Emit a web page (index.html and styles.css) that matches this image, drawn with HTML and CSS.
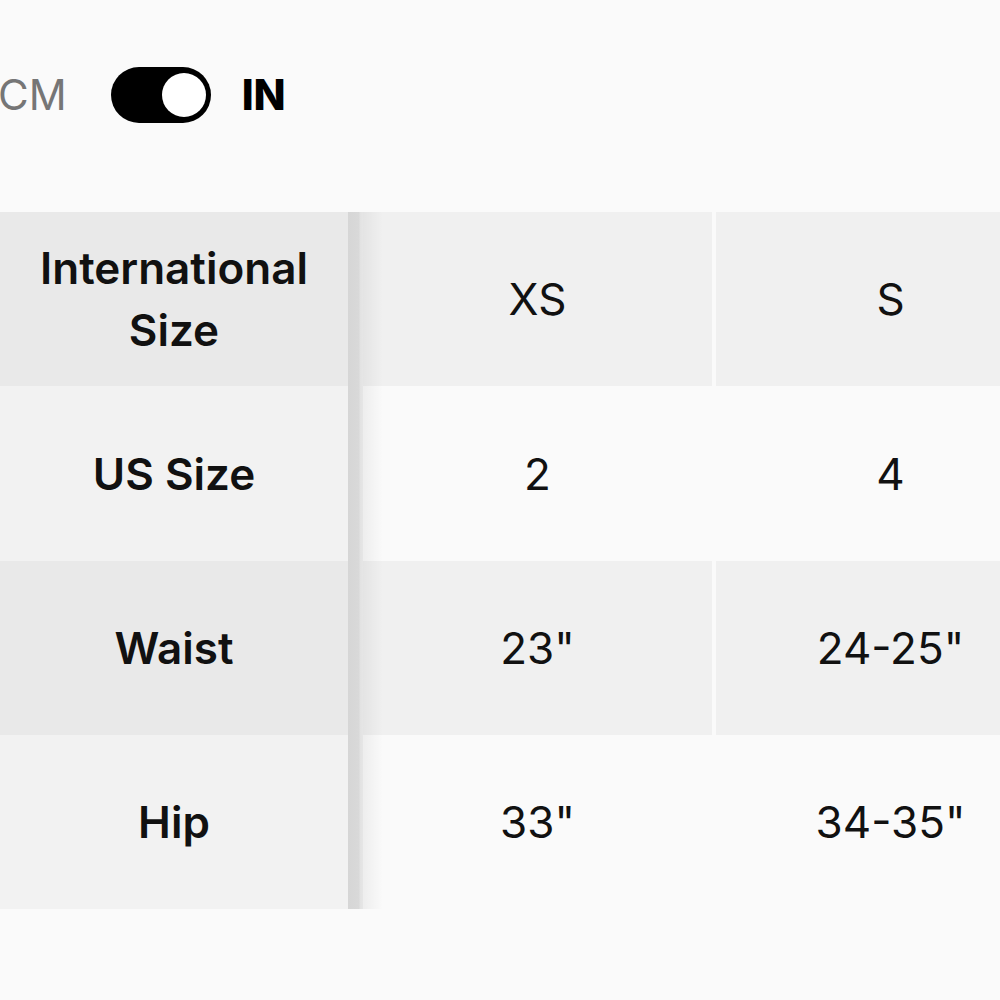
FILE: index.html
```html
<!DOCTYPE html>
<html>
<head>
<meta charset="utf-8">
<link rel="stylesheet" href="styles.css">
</head>
<body>
<div class="units">
  <span class="unit unit-off">CM</span>
  <span class="toggle"><span class="knob"></span></span>
  <span class="unit unit-on">IN</span>
</div>
<div class="table">
  <div class="row row-dark">
    <div class="cell label">International<br>Size</div>
    <div class="shade"></div>
    <div class="cell value first">XS</div>
    <div class="gap"></div>
    <div class="cell value">S</div>
  </div>
  <div class="row row-light">
    <div class="cell label">US Size</div>
    <div class="shade"></div>
    <div class="cell value first">2</div>
    <div class="gap"></div>
    <div class="cell value">4</div>
  </div>
  <div class="row row-dark">
    <div class="cell label">Waist</div>
    <div class="shade"></div>
    <div class="cell value first">23"</div>
    <div class="gap"></div>
    <div class="cell value">24-25"</div>
  </div>
  <div class="row row-light">
    <div class="cell label">Hip</div>
    <div class="shade"></div>
    <div class="cell value first">33"</div>
    <div class="gap"></div>
    <div class="cell value">34-35"</div>
  </div>
</div>
</body>
</html>
```
FILE: styles.css
```css
html, body {
  margin: 0;
  padding: 0;
  background: #fafafa;
  font-family: "Inter", "Liberation Sans", sans-serif;
  color: #111;
  overflow: hidden;
}
.units {
  display: flex;
  align-items: center;
  height: 212px;
  padding-bottom: 22px;
  box-sizing: border-box;
  margin-left: -2px;
}
.unit {
  font-size: 42px;
  line-height: 1;
}
.unit-off {
  color: #767676;
  font-weight: 400;
}
.unit-on {
  color: #000;
  font-weight: 800;
  margin-left: 31px;
}
.toggle {
  margin-left: 44px;
  width: 100px;
  height: 56px;
  border-radius: 28px;
  background: #000;
  display: flex;
  align-items: center;
  justify-content: flex-end;
  padding-right: 5px;
  box-sizing: border-box;
}
.knob {
  width: 44px;
  height: 44px;
  border-radius: 50%;
  background: #fff;
}
.table {
  display: flex;
  flex-direction: column;
  width: 1000px;
  overflow: hidden;
}
.row {
  display: flex;
  height: 174px;
}
.row:nth-child(2) { height: 175px; }
.cell {
  flex-shrink: 0;
  display: flex;
  align-items: center;
  justify-content: center;
  text-align: center;
  font-size: 44px;
  line-height: 62px;
}
.label {
  width: 348px;
  font-weight: 600;
}
.value {
  width: 349px;
  font-weight: 400;
}
.shade {
  flex-shrink: 0;
  width: 15px;
  background: linear-gradient(to right, #d6d6d6 0, #d9d9d9 11px, #e2e2e2 12px, #e6e6e6 15px);
}
.value.first {
  background-image: linear-gradient(to right, rgba(0,0,0,0.05), rgba(0,0,0,0) 20px);
}
.gap {
  flex-shrink: 0;
  width: 4px;
  background: #fafafa;
}
.row-dark .label { background-color: #e9e9e9; }
.row-dark .value { background-color: #f0f0f0; }
.row-light .label { background-color: #f2f2f2; }
.row-light .value { background-color: #fafafa; }
```
